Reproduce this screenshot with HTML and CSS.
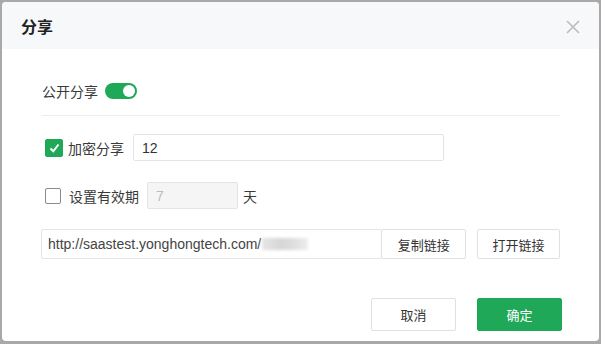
FILE: index.html
```html
<!DOCTYPE html>
<html lang="zh">
<head>
<meta charset="utf-8">
<link rel="stylesheet" href="styles.css">
</head>
<body>
<div class="dialog">
  <div class="header">
    <span class="title">分享</span>
    <svg class="close" width="14" height="14" viewBox="0 0 14 14"><path d="M1 1L13 13M13 1L1 13" stroke="#bdbdbd" stroke-width="1.7" fill="none"/></svg>
  </div>
  <div class="content">
    <div class="row row-public">
      <span class="label">公开分享</span>
      <span class="toggle"><span class="knob"></span></span>
    </div>
    <div class="divider"></div>
    <div class="row row-pwd">
      <span class="check checked"><svg width="11" height="10" viewBox="0 0 11 10"><path d="M1.5 5.5L4.3 8.3L9.5 1.5" stroke="#fff" stroke-width="2" fill="none"/></svg></span>
      <span class="label">加密分享</span>
      <div class="input pwd-input">12</div>
    </div>
    <div class="row row-exp">
      <span class="check"></span>
      <span class="label">设置有效期</span>
      <div class="input days-input">7</div>
      <span class="label unit">天</span>
    </div>
    <div class="row row-link">
      <div class="input url-input"><span>http://saastest.yonghongtech.com/</span><span class="blur"></span></div>
      <button class="btn copy">复制链接</button>
      <button class="btn open">打开链接</button>
    </div>
  </div>
  <div class="footer">
    <button class="btn cancel">取消</button>
    <button class="btn ok">确定</button>
  </div>
</div>
</body>
</html>
```
FILE: styles.css
```css
html, body {
  margin: 0;
  padding: 0;
}
body {
  background: #a9a9a9;
  width: 601px;
  height: 344px;
  overflow: hidden;
  font-family: "Noto Sans CJK SC", "Liberation Sans", sans-serif;
}
.dialog {
  margin: 2px 2px 0 2px;
  height: 339px;
  background: #fff;
  border-radius: 4px;
  overflow: hidden;
  display: flex;
  flex-direction: column;
}
.header {
  height: 47px;
  background: #f7f8fa;
  display: flex;
  align-items: center;
  justify-content: space-between;
  padding: 0 19px 0 19px;
  flex-shrink: 0;
}
.title {
  font-size: 16px;
  font-weight: bold;
  color: #222;
}
.close {
  display: block;
  margin-top: 2px;
}
.content {
  padding: 0 39px 0 40px;
}
.row {
  display: flex;
  align-items: center;
}
.label {
  font-size: 14px;
  color: #3a3a3a;
}
.row-public {
  margin-top: 30px;
  height: 24px;
}
.toggle {
  width: 32px;
  height: 16px;
  border-radius: 8px;
  background: #1fa857;
  margin-left: 7px;
  position: relative;
}
.knob {
  position: absolute;
  right: 2px;
  top: 2px;
  width: 12px;
  height: 12px;
  border-radius: 50%;
  background: #fff;
}
.divider {
  height: 1px;
  background: #ececec;
  margin-top: 12px;
}
.row-pwd {
  margin-top: 18px;
}
.check {
  width: 16px;
  height: 16px;
  border: 1px solid #8a8a8a;
  border-radius: 2px;
  box-sizing: border-box;
  margin-left: 3px;
  margin-right: 8px;
  display: flex;
  align-items: center;
  justify-content: center;
}
.check.checked {
  width: 18px;
  height: 18px;
  background: #1fa857;
  border-color: #1fa857;
  margin-right: 5px;
}
.input {
  box-sizing: border-box;
  border: 1px solid #e4e4e4;
  border-radius: 2px;
  height: 27px;
  display: flex;
  align-items: center;
  padding: 0 8px;
  font-family: "Liberation Sans", "Noto Sans CJK SC", sans-serif;
  font-size: 14px;
  color: #333;
}
.pwd-input {
  width: 311px;
  margin-left: 9px;
}
.row-exp {
  margin-top: 21px;
}
.days-input {
  width: 91px;
  margin-left: 8px;
  background: #f5f5f5;
  color: #bbb;
  height: 27px;
}
.unit {
  margin-left: 5px;
}
.row-link {
  margin-top: 20px;
  margin-left: -1px;
}
.url-input {
  width: 342px;
  height: 30px;
  padding-left: 6px;
  color: #444;
}
.blur {
  display: inline-block;
  width: 46px;
  height: 12px;
  margin-left: 1px;
  background: linear-gradient(90deg, #e6e6e6, #d6d6d6 40%, #dedede 70%, #eeeeee);
  filter: blur(1.5px);
}
.btn {
  box-sizing: border-box;
  border: 1px solid #e0e0e0;
  border-radius: 2px;
  background: #fff;
  font-family: "Noto Sans CJK SC", sans-serif;
  font-size: 13px;
  color: #333;
  padding: 0;
  height: 30px;
}
.copy {
  width: 85px;
  margin-left: -1px;
}
.open {
  width: 83px;
  margin-left: 11px;
}
.footer {
  display: flex;
  justify-content: flex-end;
  padding-right: 37px;
  margin-top: 39px;
}
.cancel, .ok {
  width: 85px;
  height: 33px;
}
.ok {
  margin-left: 21px;
  background: #1fa857;
  border-color: #1fa857;
  color: #fff;
}
```
